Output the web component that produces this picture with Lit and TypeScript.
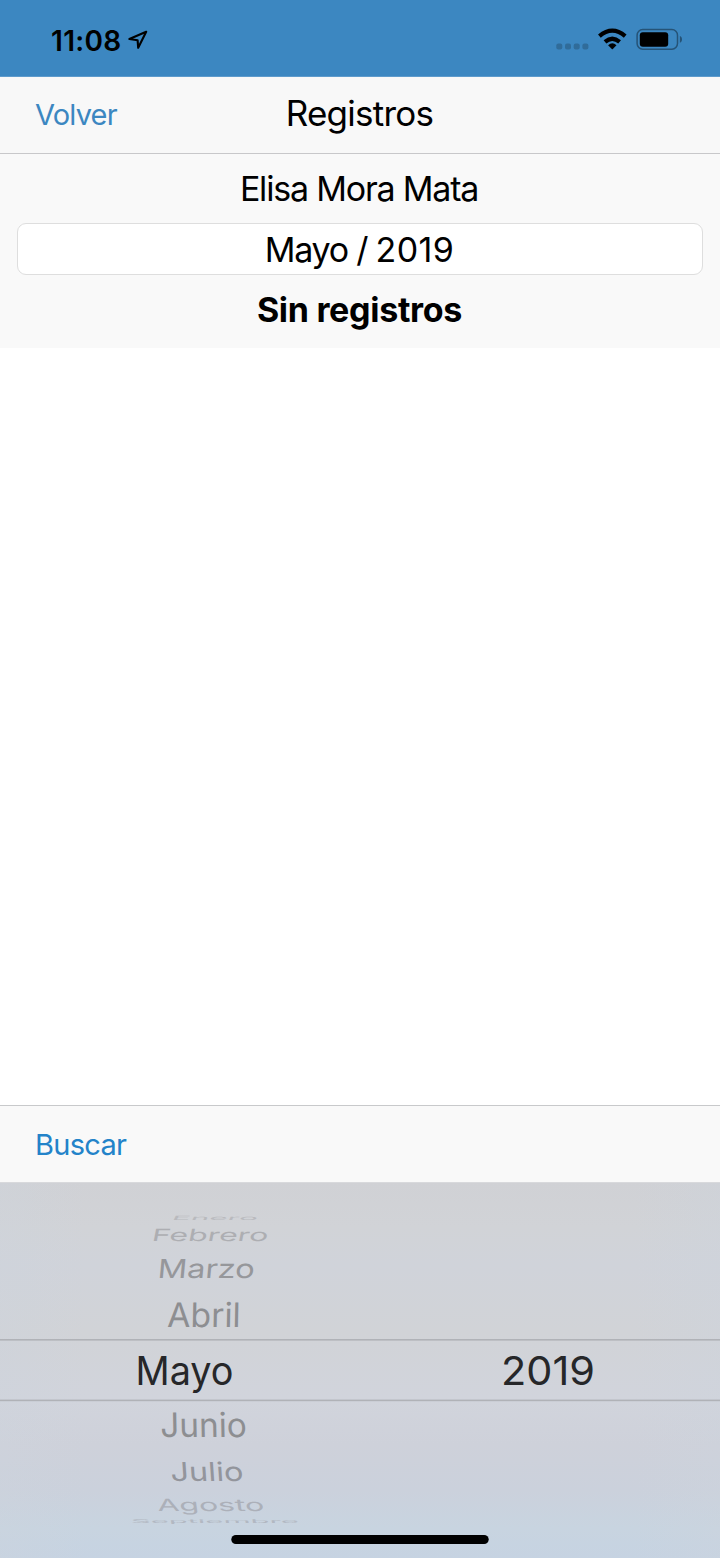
import { LitElement, html, svg, css } from "lit";
import { customElement } from "lit/decorators.js";

interface WheelRow {
  label: string;
  x: number;
  baseline: number;
  width: number;
  squash: number;
  lean: number;
  shade: string;
}

// Rows of the month wheel: squash and lean follow the curvature of the cylinder.
const MONTHS: WheelRow[] = [
  { label: "Enero", x: 171, baseline: 38.3, width: 86, squash: 0.15, lean: -14, shade: "#b9babe" },
  { label: "Febrero", x: 151, baseline: 59, width: 116.5, squash: 0.43, lean: -7, shade: "#adaeb2" },
  { label: "Marzo", x: 157, baseline: 96, width: 97, squash: 0.67, lean: -4, shade: "#96979b" },
  { label: "Abril", x: 167, baseline: 145.3, width: 73.5, squash: 0.86, lean: -1, shade: "#8d8e91" },
  { label: "Mayo", x: 135.5, baseline: 202.5, width: 98, squash: 1.01, lean: 0, shade: "#262729" },
  { label: "Junio", x: 160.5, baseline: 254.7, width: 86.5, squash: 0.86, lean: 1, shade: "#8d8e91" },
  { label: "Julio", x: 171, baseline: 298.9, width: 73, squash: 0.67, lean: 3, shade: "#93959c" },
  { label: "Agosto", x: 158, baseline: 329, width: 107, squash: 0.43, lean: 5, shade: "#acb0b9" },
  { label: "Septiembre", x: 131, baseline: 340.6, width: 168, squash: 0.13, lean: 5, shade: "#b2b8c2" },
];

const YEARS: WheelRow[] = [
  { label: "2019", x: 501, baseline: 202.5, width: 94, squash: 1.01, lean: 0, shade: "#262729" },
];

@customElement("status-bar")
export class StatusBar extends LitElement {
  static styles = css`
    :host {
      display: flex;
      justify-content: space-between;
      height: 77px;
      box-sizing: border-box;
      background: #3c87c1;
      border-bottom: 1px solid #5e9bcc;
      padding: 4px 37px 0 51px;
    }
    .side { display: flex; align-items: center; }
    .time { font-size: 28px; font-weight: 600; line-height: 32px; letter-spacing: 0.3px; padding-top: 2px; }
    svg { display: block; }
    .arrow { margin: -1px 0 0 6.5px; }
  `;
  render() {
    return html`
      <div class="side">
        <span class="time">11:08</span>
        <svg class="arrow" width="20" height="20" viewBox="0 0 20 20">
          <path d="M18.2 1.8 1.4 9l8.2 1.2.6 7.6Z" fill="none" stroke="#000" stroke-width="2.1" stroke-linejoin="round" />
        </svg>
      </div>
      <div class="side">
        <svg width="127" height="24" viewBox="556 28 127 24">
          <g fill="#306c9a">
            <rect x="556.3" y="43.6" width="6" height="6" rx="2" />
            <rect x="565" y="43.6" width="6" height="6" rx="2" />
            <rect x="573.7" y="43.6" width="6" height="6" rx="2" />
            <rect x="582.4" y="43.6" width="6" height="6" rx="2" />
          </g>
          <g fill="none" stroke="#000" stroke-width="4.2">
            <path d="M599.4 36.1Q612.3 25.3 625.2 36.1" />
            <path d="M605 41.8Q612.3 35.6 619.6 41.8" />
          </g>
          <path d="M608.1 45.2Q612.3 41.5 616.5 45.2L612.8 49Q612.3 49.4 611.8 49Z" fill="#000" />
          <rect x="637.1" y="29.6" width="40.4" height="19.6" rx="5.6" fill="none" stroke="#255377" stroke-width="1.5" />
          <rect x="639.8" y="32.2" width="28.4" height="14.5" rx="3" fill="#000" />
          <path d="M679.9 36C682.7 37 682.7 41.8 679.9 42.8Z" fill="#255377" />
        </svg>
      </div>
    `;
  }
}

@customElement("wheel-picker")
export class WheelPicker extends LitElement {
  static styles = css`
    :host {
      display: block;
      height: 376px;
      background:
        linear-gradient(90deg, rgba(205, 212, 221, 0.35), rgba(205, 212, 221, 0) 12%, rgba(205, 212, 221, 0) 88%, rgba(205, 212, 221, 0.35)),
        linear-gradient(#d0d1d5 0, #d1d3d7 12%, #d0d3da 22%, #d1d3d7 40%, #d1d4dc 58%, #ced1da 70%, #cbd1dc 82%, #c8d4e0 92%, #c6d3e2 100%);
    }
    svg { display: block; }
    .row { font-family: Inter, "Liberation Sans", sans-serif; font-size: 39px; }
  `;
  private row(r: WheelRow) {
    return svg`<text class="row" fill=${r.shade} textLength=${r.width} lengthAdjust="spacingAndGlyphs"
      transform="translate(${r.x} ${r.baseline}) skewX(${r.lean * (2 - r.squash)}) scale(1 ${r.squash})">${r.label}</text>`;
  }
  render() {
    return html`
      <svg width="720" height="376" viewBox="0 0 720 376">
        <rect y="0" width="720" height="1" fill="#d8d9dc" />
        <rect y="157" width="720" height="1.6" fill="#b0b2b7" />
        <rect y="217.6" width="720" height="1.6" fill="#b0b2b7" />
        ${MONTHS.map((r) => this.row(r))}
        ${YEARS.map((r) => this.row(r))}
        <rect x="231.3" y="353" width="257.4" height="9" rx="4.5" fill="#000" />
      </svg>
    `;
  }
}

@customElement("app-root")
export class AppRoot extends LitElement {
  static styles = css`
    :host {
      display: flex;
      flex-direction: column;
      width: 720px;
      height: 1558px;
      background: #fff;
      color: #000;
      font-family: Inter, "Liberation Sans", sans-serif;
      white-space: nowrap;
      overflow: hidden;
    }
    .nav {
      display: grid;
      grid-template-columns: 1fr auto 1fr;
      height: 77px;
      box-sizing: border-box;
      padding: 0 36px 0 35px;
      background: #f8f8f8;
      border-bottom: 1px solid #c8c8ca;
      line-height: 72px;
    }
    .link { font-size: 29px; color: #3c87c1; }
    .back { padding-top: 2px; letter-spacing: -0.8px; }
    .title { font-size: 35px; letter-spacing: -0.75px; }
    .summary {
      display: flex;
      flex-direction: column;
      height: 194px;
      box-sizing: border-box;
      padding: 10px 17px 0;
      background: #f9f9f9;
      text-align: center;
      font-size: 34px;
    }
    .name { height: 59px; line-height: 49px; letter-spacing: -1.2px; padding-right: 2px; }
    .field {
      height: 52px;
      box-sizing: border-box;
      border: 1px solid #dedede;
      border-radius: 9px;
      background: #fff;
      line-height: 51px;
      letter-spacing: -1.25px;
      padding-right: 1px;
    }
    .year { letter-spacing: 0.4px; }
    .empty { font-weight: 700; line-height: 70px; letter-spacing: -0.3px; padding-right: 1px; }
    .list { flex: 1; }
    .toolbar {
      height: 77px;
      box-sizing: border-box;
      padding-left: 35px;
      background: #f9f9f9;
      border-top: 1px solid #c8c9cb;
      line-height: 77px;
    }
    .search { color: #2383c9; letter-spacing: -0.7px; }
  `;
  render() {
    return html`
      <status-bar></status-bar>
      <header class="nav">
        <span class="link back">Volver</span>
        <span class="title">Registros</span>
      </header>
      <section class="summary">
        <div class="name">Elisa Mora Mata</div>
        <div class="field">Mayo / <span class="year">2019</span></div>
        <div class="empty">Sin registros</div>
      </section>
      <main class="list"></main>
      <div class="toolbar"><span class="link search">Buscar</span></div>
      <wheel-picker></wheel-picker>
    `;
  }
}
